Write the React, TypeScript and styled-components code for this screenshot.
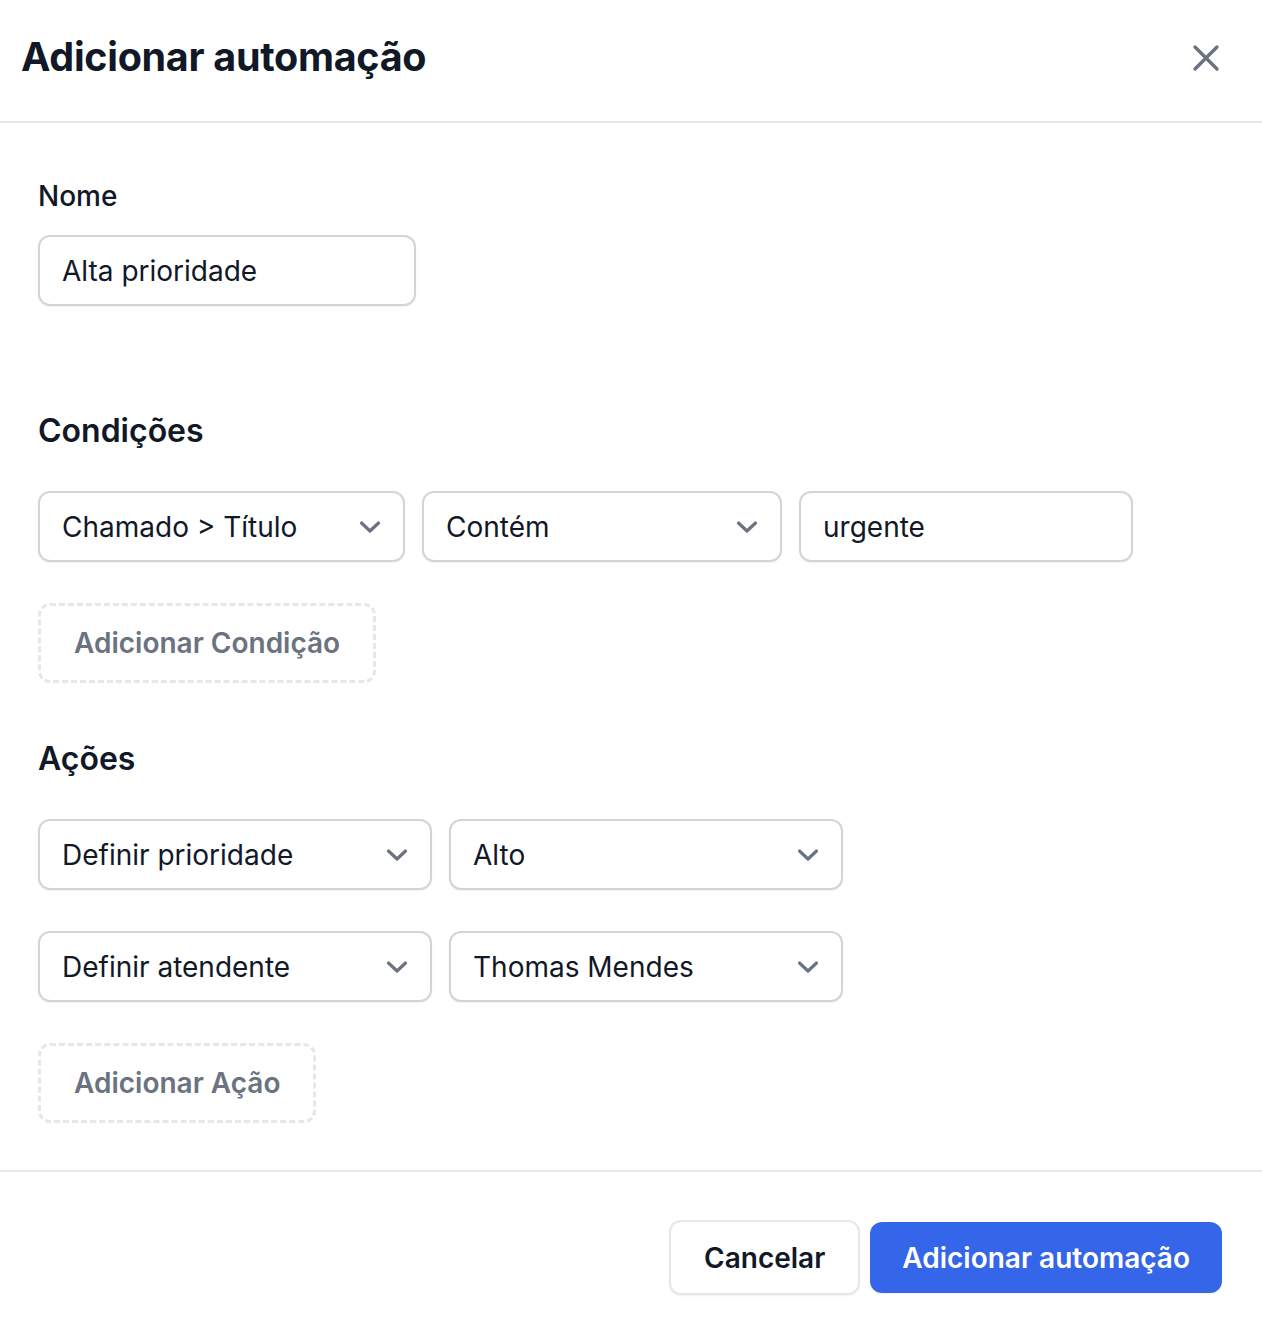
import React from 'react';
import styled, { createGlobalStyle } from 'styled-components';

const GlobalStyle = createGlobalStyle`
  html, body {
    margin: 0;
    padding: 0;
    background: #ffffff;
  }
  body {
    font-family: Inter, 'Noto Sans', 'Liberation Sans', sans-serif;
    color: #111827;
  }
`;

const Modal = styled.div`
  width: 1262px;
  min-height: 1336px;
  display: flex;
  flex-direction: column;
  background: #ffffff;
`;

const Header = styled.header`
  height: 121px;
  display: flex;
  align-items: center;
  justify-content: space-between;
  padding: 0 38px 0 21px;
  border-bottom: 2px solid #e5e7eb;
`;

const Title = styled.h1`
  margin: 0;
  font-size: 39.5px;
  font-weight: 700;
  letter-spacing: -0.3px;
  line-height: 1.2;
  color: #111827;
  padding-bottom: 6px;
`;

const CloseButton = styled.button`
  display: flex;
  align-items: center;
  justify-content: center;
  width: 36px;
  height: 36px;
  padding: 0;
  border: none;
  background: none;
  color: #6b7280;
  cursor: pointer;
  margin-bottom: 6px;
`;

const Body = styled.div`
  display: flex;
  flex-direction: column;
  align-items: flex-start;
  padding: 52px 38px 47px;
  border-bottom: 2px solid #e5e7eb;
`;

const Label = styled.label`
  font-size: 28px;
  font-weight: 500;
  line-height: 42px;
  margin-bottom: 18px;
`;

const SectionTitle = styled.h2<{ $top: number }>`
  margin: ${({ $top }) => $top}px 0 39px;
  font-size: 32px;
  font-weight: 600;
  line-height: 42px;
`;

const Row = styled.div`
  display: flex;
  gap: 17px;
  & + & {
    margin-top: 41px;
  }
`;

const Field = styled.div<{ $width: number }>`
  box-sizing: border-box;
  width: ${({ $width }) => $width}px;
  height: 71px;
  display: flex;
  align-items: center;
  justify-content: space-between;
  padding: 0 22px 0 22px;
  border: 2px solid #d1d5db;
  border-radius: 12px;
  background: #ffffff;
  box-shadow: 0 1px 2px rgba(17, 24, 39, 0.06);
  font-size: 28px;
  line-height: 1;
  color: #111827;
  white-space: nowrap;
`;

const AddButton = styled.button<{ $top: number }>`
  box-sizing: border-box;
  margin-top: ${({ $top }) => $top}px;
  height: 80px;
  padding: 0 33px;
  border: 3px dashed #e5e7eb;
  border-radius: 12px;
  background: #ffffff;
  font-family: inherit;
  font-size: 28px;
  font-weight: 600;
  color: #6b7280;
  cursor: pointer;
`;

const Footer = styled.footer`
  display: flex;
  justify-content: flex-end;
  align-items: center;
  gap: 10px;
  padding: 48px 40px 0;
`;

const Button = styled.button<{ $primary?: boolean }>`
  box-sizing: border-box;
  height: ${({ $primary }) => ($primary ? '71px' : '75px')};
  padding: 0 ${({ $primary }) => ($primary ? '32px' : '33px')};
  border: ${({ $primary }) => ($primary ? 'none' : '2px solid #e5e7eb')};
  border-radius: 12px;
  background: ${({ $primary }) => ($primary ? '#3565e8' : '#ffffff')};
  color: ${({ $primary }) => ($primary ? '#ffffff' : '#111827')};
  font-family: inherit;
  font-size: 28px;
  font-weight: 600;
  cursor: pointer;
  box-shadow: 0 1px 2px rgba(17, 24, 39, 0.06);
`;

const Chevron = () => (
  <svg width="22" height="14" viewBox="0 0 22 14" fill="none">
    <path d="M2.5 3 L11 11 L19.5 3" stroke="#6b7280" strokeWidth="3.2" strokeLinecap="round" strokeLinejoin="round" />
  </svg>
);

const CloseIcon = () => (
  <svg width="28" height="28" viewBox="0 0 28 28" fill="none">
    <path d="M3 3 L25 25 M25 3 L3 25" stroke="currentColor" strokeWidth="3.4" strokeLinecap="round" />
  </svg>
);

const Select = ({ value, width }: { value: string; width: number }) => (
  <Field $width={width}>
    <span>{value}</span>
    <Chevron />
  </Field>
);

export default function App() {
  return (
    <>
      <GlobalStyle />
      <Modal>
        <Header>
          <Title>Adicionar automação</Title>
          <CloseButton aria-label="Fechar">
            <CloseIcon />
          </CloseButton>
        </Header>

        <Body>
          <Label>Nome</Label>
          <Field $width={378}>Alta prioridade</Field>

          <SectionTitle $top={104}>Condições</SectionTitle>
          <Row>
            <Select value="Chamado > Título" width={367} />
            <Select value="Contém" width={360} />
            <Field $width={334}>urgente</Field>
          </Row>
          <AddButton $top={41}>Adicionar Condição</AddButton>

          <SectionTitle $top={55}>Ações</SectionTitle>
          <Row>
            <Select value="Definir prioridade" width={394} />
            <Select value="Alto" width={394} />
          </Row>
          <Row>
            <Select value="Definir atendente" width={394} />
            <Select value="Thomas Mendes" width={394} />
          </Row>
          <AddButton $top={41}>Adicionar Ação</AddButton>
        </Body>

        <Footer>
          <Button>Cancelar</Button>
          <Button $primary>Adicionar automação</Button>
        </Footer>
      </Modal>
    </>
  );
}
